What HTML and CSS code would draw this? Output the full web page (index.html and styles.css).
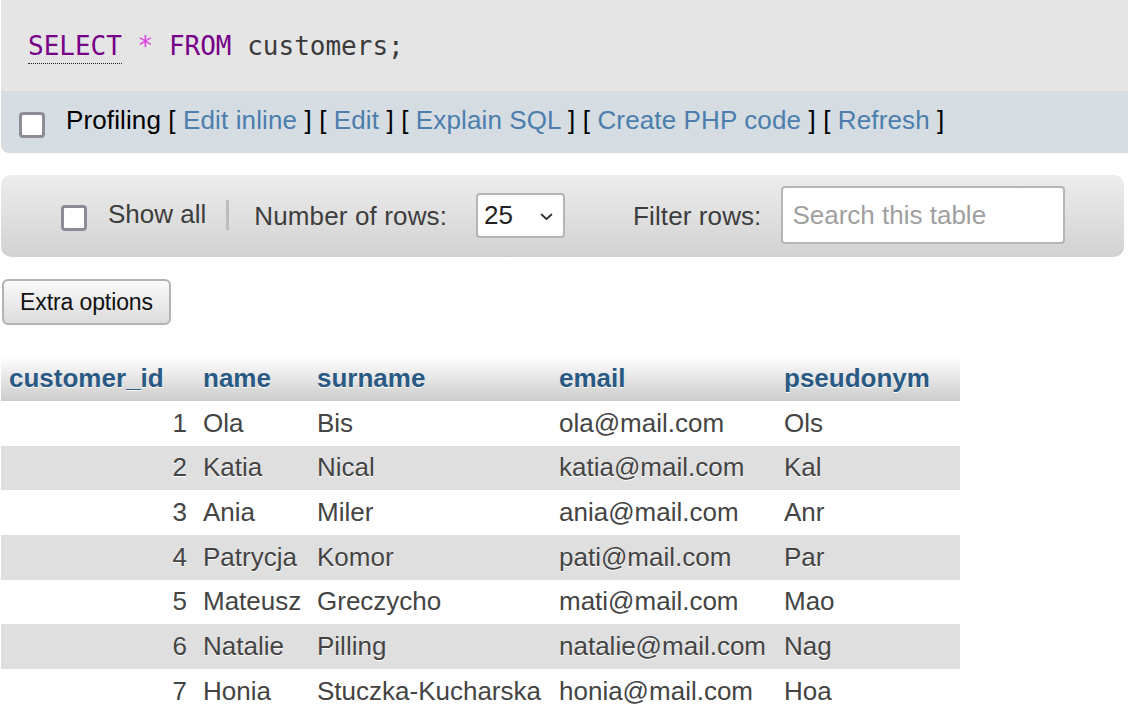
FILE: index.html
```html
<!DOCTYPE html>
<html>
<head>
<meta charset="utf-8">
<link rel="stylesheet" href="styles.css">
</head>
<body>
<div class="page">
  <div class="sqlbox">
    <code class="sql"><span class="kw sel">SELECT</span> <span class="star">*</span> <span class="kw">FROM</span> <span class="ident">customers;</span></code>
  </div>
  <div class="tools">
    <span class="cb"></span>
    <span class="toolstext">Profiling [ <a>Edit inline</a> ] [ <a>Edit</a> ] [ <a>Explain SQL</a> ] [ <a>Create PHP code</a> ] [ <a>Refresh</a> ]</span>
  </div>

  <div class="filterbar">
    <span class="cb cb-show"></span>
    <span class="lbl lbl-show">Show all</span>
    <span class="sep"></span>
    <span class="lbl lbl-num">Number of rows:</span>
    <span class="select"><span>25</span>
      <svg class="chev" width="13" height="8" viewBox="0 0 13 8"><path d="M1.5 1.5 L6.5 6 L11.5 1.5" fill="none" stroke="#333" stroke-width="1.8" stroke-linecap="round" stroke-linejoin="round"/></svg>
    </span>
    <span class="lbl lbl-filter">Filter rows:</span>
    <span class="search">Search this table</span>
  </div>

  <div class="btnrow"><span class="btn">Extra options</span></div>

  <table class="data">
    <thead>
      <tr><th class="c1">customer_id</th><th class="c2">name</th><th class="c3">surname</th><th class="c4">email</th><th class="c5">pseudonym</th></tr>
    </thead>
    <tbody>
      <tr><td class="num">1</td><td>Ola</td><td>Bis</td><td>ola@mail.com</td><td>Ols</td></tr>
      <tr class="even"><td class="num">2</td><td>Katia</td><td>Nical</td><td>katia@mail.com</td><td>Kal</td></tr>
      <tr><td class="num">3</td><td>Ania</td><td>Miler</td><td>ania@mail.com</td><td>Anr</td></tr>
      <tr class="even"><td class="num">4</td><td>Patrycja</td><td>Komor</td><td>pati@mail.com</td><td>Par</td></tr>
      <tr><td class="num">5</td><td>Mateusz</td><td>Greczycho</td><td>mati@mail.com</td><td>Mao</td></tr>
      <tr class="even"><td class="num">6</td><td>Natalie</td><td>Pilling</td><td>natalie@mail.com</td><td>Nag</td></tr>
      <tr><td class="num">7</td><td>Honia</td><td>Stuczka-Kucharska</td><td>honia@mail.com</td><td>Hoa</td></tr>
    </tbody>
  </table>
</div>
</body>
</html>
```

FILE: styles.css
```css
html, body {
  margin: 0;
  padding: 0;
  background: #fff;
  overflow: hidden;
}
body {
  font-family: "Liberation Sans", Arial, sans-serif;
  font-size: 26px;
  color: #444;
}
.page {
  padding-left: 1px;
  width: 1140px;
}
.sqlbox {
  background: #e5e5e5;
  height: 91px;
  display: flex;
  align-items: center;
  padding-left: 27px;
}
.sql {
  font-family: "DejaVu Sans Mono", monospace;
  font-size: 26px;
  color: #3a3a3a;
  white-space: pre;
}
.kw { color: #770088; }
.sel {
  border-bottom: 1px dotted #222;
  padding-bottom: 2px;
}
.star { color: #e040e0; }
.tools {
  background: #d5dce2;
  height: 62px;
  display: flex;
  align-items: center;
  padding-left: 18px;
  border-radius: 0 0 8px 8px;
}
.cb {
  box-sizing: border-box;
  width: 26px;
  height: 26px;
  border: 3px solid #8d8c96;
  border-radius: 4px;
  background: #fff;
  flex: none;
}
.tools .cb { margin-top: 5px; }
.toolstext {
  margin-left: 21px;
  margin-top: -4px;
  color: #000;
  white-space: pre;
  letter-spacing: 0.12px;
}
.toolstext a { color: #4b7eac; }

.filterbar {
  margin-top: 22px;
  width: 1123px;
  height: 82px;
  box-sizing: border-box;
  border-radius: 10px;
  background: linear-gradient(#ededed, #d2d2d2);
  display: flex;
  align-items: center;
  padding-left: 60px;
}
.filterbar .cb { margin-top: 3px; }
.lbl { color: #3d3d3d; white-space: pre; }
.lbl-show { margin-left: 21px; margin-top: -4px; }
.sep {
  width: 3px;
  height: 30px;
  background: #bdbdbd;
  margin-left: 20px;
  margin-top: -2px;
}
.lbl-num { margin-left: 25px; letter-spacing: 0.14px; }
.select {
  box-sizing: border-box;
  margin-left: 29px;
  width: 89px;
  height: 45px;
  border: 2px solid #b5b5b5;
  border-radius: 4px;
  background: #fff;
  display: flex;
  align-items: center;
  padding-left: 6px;
  color: #222;
  margin-top: -2px;
}
.chev { margin-left: 27px; margin-top: 3px; }
.lbl-filter { margin-left: 68px; letter-spacing: 0.1px; }
.search {
  box-sizing: border-box;
  margin-left: 20px;
  width: 284px;
  height: 58px;
  border: 2px solid #b5b5b5;
  border-radius: 4px;
  background: #fff;
  color: #a0a0a0;
  display: flex;
  align-items: center;
  padding-left: 9px;
  margin-top: -2px;
}

.btnrow {
  margin-top: 22px;
  padding-left: 1px;
}
.btn {
  display: inline-flex;
  align-items: center;
  box-sizing: border-box;
  width: 169px;
  height: 46px;
  padding-left: 16px;
  border: 2px solid #b3b3b3;
  border-radius: 6px;
  background: linear-gradient(#fafafa, #dcdcdc);
  color: #111;
  font-size: 23px;
  letter-spacing: -0.1px;
}

.data {
  margin-top: 31px;
  border-collapse: collapse;
  table-layout: fixed;
  width: 959px;
}
.data th {
  height: 45px;
  padding: 0 8px;
  text-align: left;
  color: #2a5a84;
  font-weight: bold;
  text-shadow: 0 1px 0 #fff;
  background: linear-gradient(#ffffff, #cccccc);
  white-space: nowrap;
}
.c1 { width: 194px; }
.c2 { width: 114px; }
.c3 { width: 242px; }
.c4 { width: 225px; }
.c5 { width: 184px; }
.data th.c1, .data th.c2, .data th.c3, .data th.c4, .data th.c5 { box-sizing: border-box; }
.data td {
  height: 44.67px;
  padding: 0 8px;
  box-sizing: border-box;
  color: #444;
  text-shadow: 0 1px 0 #fff;
  white-space: nowrap;
  background: #fff;
}
.data tr.even td { background: #dfdfdf; }
.data td.num { text-align: right; }
```
